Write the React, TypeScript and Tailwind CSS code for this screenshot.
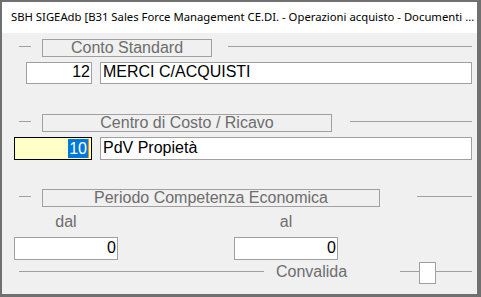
import React from "react";

const font = { fontFamily: '"Liberation Sans", Arial, sans-serif' };

const SectionHeader: React.FC<{ label: string; boxW: string; gap: string }> = ({
  label,
  boxW,
  gap,
}) => (
  <div className="flex items-start h-[18px]">
    <div className="ml-[17px] mt-[7px] w-[12px] h-px bg-[#a0a0a0]" />
    <div
      className={`ml-[11px] ${boxW} h-[18px] border border-[#a0a0a0] text-[16px] leading-[16px] text-[#6d6d6d] text-center whitespace-nowrap`}
    >
      {label}
    </div>
    <div className={`${gap} mr-[5px] mt-[7px] flex-1 h-px bg-[#a0a0a0]`} />
  </div>
);

export default function App() {
  return (
    <div
      className="w-[481px] h-[297px] flex flex-col bg-[#f0f0f0] border-l-2 border-t-2 border-r-4 border-b-3 border-[#707070] overflow-hidden"
      style={font}
    >
      {/* title bar */}
      <div
        className="h-[31px] bg-white flex items-center pl-[9px] text-[11.3px] text-black whitespace-nowrap overflow-hidden"
        style={{ fontFamily: '"Noto Sans", "Open Sans", sans-serif' }}
      >
        SBH SIGEAdb [B31 Sales Force Management CE.DI. - Operazioni acquisto - Documenti ...
      </div>

      <div className="flex-1 flex flex-col">
        {/* Conto Standard */}
        <div className="mt-[6px]">
          <SectionHeader label="Conto Standard" boxW="w-[170px]" gap="ml-[16px]" />
        </div>
        <div className="flex mt-[5px] h-[22px]">
          <div className="ml-[24px] w-[66px] border border-[#a0a0a0] bg-white text-right pr-[1px] text-[16px] leading-[18px]">
            12
          </div>
          <div className="ml-[8px] mr-[5px] flex-1 border border-[#a0a0a0] bg-white pl-[2px] text-[16px] leading-[18px]">
            MERCI C/ACQUISTI
          </div>
        </div>

        {/* Centro di Costo / Ricavo */}
        <div className="mt-[30px]">
          <SectionHeader label="Centro di Costo / Ricavo" boxW="w-[290px]" gap="ml-[18px]" />
        </div>
        <div className="flex mt-[5px] h-[23px]">
          <div className="ml-[12px] w-[78px] border border-black bg-[#ffffc8] flex justify-end items-start pt-px pr-[2px]">
            <span className="bg-[#0078d7] text-white text-[16px] leading-[19px] px-px">10</span>
            <span className="w-px h-[19px] bg-[#ff8c00]" />
          </div>
          <div className="ml-[8px] mr-[5px] flex-1 border border-[#a0a0a0] bg-white pl-[2px] text-[16px] leading-[19px]">
            PdV Propietà
          </div>
        </div>

        {/* Periodo Competenza Economica */}
        <div className="mt-[29px]">
          <SectionHeader label="Periodo Competenza Economica" boxW="w-[338px]" gap="ml-[37px]" />
        </div>
        <div className="flex h-[30px] items-center text-[16px] text-[#6d6d6d]">
          <div className="ml-[12px] w-[104px] text-center">dal</div>
          <div className="ml-[116px] w-[104px] text-center">al</div>
        </div>
        <div className="flex h-[23px]">
          <div className="ml-[12px] w-[104px] border border-[#a0a0a0] bg-white text-right pr-[1px] text-[16px] leading-[19px]">
            0
          </div>
          <div className="ml-[116px] w-[104px] border border-[#a0a0a0] bg-white text-right pr-[1px] text-[16px] leading-[19px]">
            0
          </div>
        </div>

        {/* Convalida */}
        <div className="flex items-start mt-[2px] h-[22px]">
          <div className="ml-[17px] mt-[9px] w-[245px] h-px bg-[#a0a0a0]" />
          <div className="ml-[12px] text-[16px] leading-[18px] mt-[1px] text-[#6d6d6d]">Convalida</div>
          <div className="ml-[53px] mt-[9px] w-[19px] h-px bg-[#a0a0a0]" />
          <div className="w-[17px] h-[22px] border border-[#a0a0a0] bg-white" />
          <div className="mr-[5px] mt-[9px] flex-1 h-px bg-[#a0a0a0]" />
        </div>
      </div>
    </div>
  );
}
